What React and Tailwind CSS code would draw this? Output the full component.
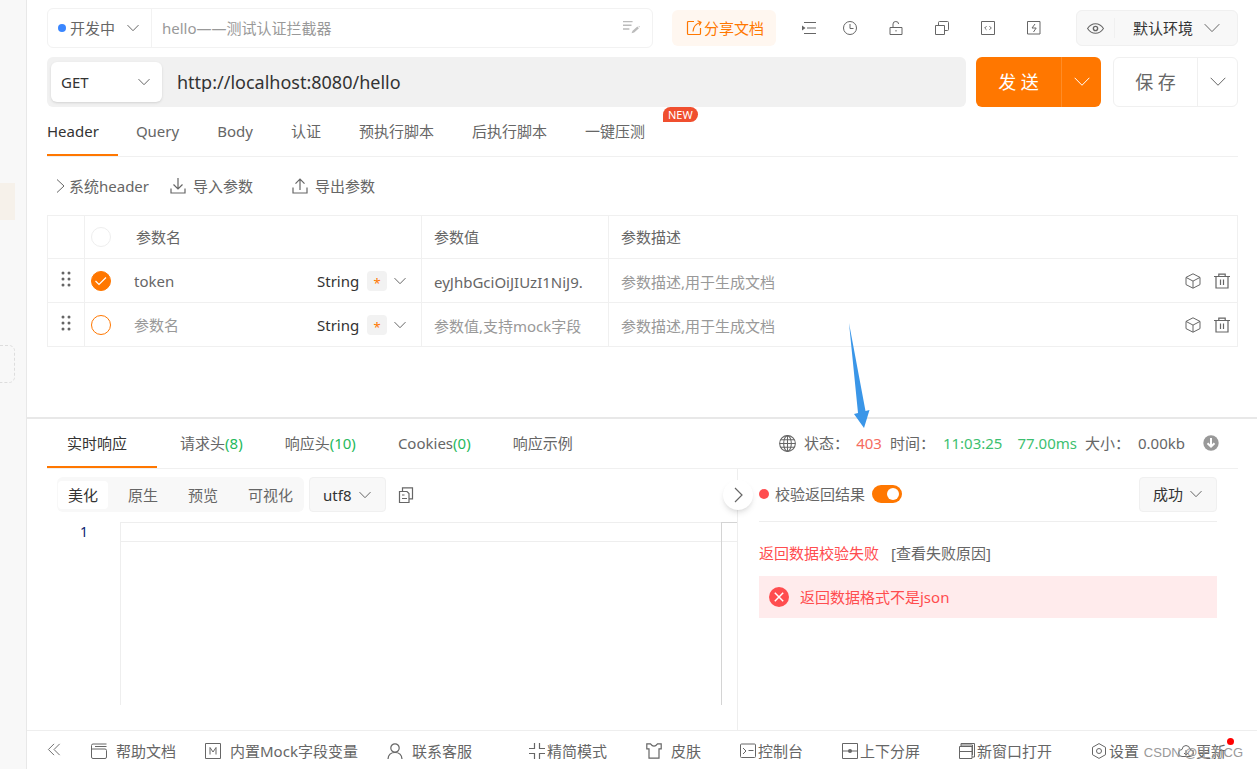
import React, { useState } from "react"

// Thin arrow used by every drop-down on the page
const Chevron = ({ className = "w-3" }) => (
  <svg viewBox="0 0 12 7" fill="none" stroke="currentColor" strokeWidth="1" className={`pointer-events-none shrink-0 ${className}`}>
    <path d="M.5.6 6 6.2 11.5.6" vectorEffect="non-scaling-stroke" />
  </svg>
)

const Icon = ({ children, className = "size-4" }) => (
  <svg viewBox="0 0 16 16" fill="none" stroke="currentColor" strokeWidth="1" className={`shrink-0 ${className}`}>
    {children}
  </svg>
)

const icons = {
  share: (
    <>
      <path d="M8 1.5H2.5q-1 0-1 1v11q0 1 1 1h11q1 0 1-1V8" strokeWidth="1.2" />
      <path d="M7 11.5C7.200 7 9 4 14.200 2.500M11.500.800l3.500 1.400-1.800 3.200" strokeWidth="1.2" />
    </>
  ),
  indent: (
    <>
      <path d="M3 2.500h12M6 8h9M3 13.500h12" strokeWidth="1.2" />
      <path d="M1 5.500v5L4.500 8z" fill="currentColor" stroke="none" />
    </>
  ),
  clock: (
    <>
      <circle cx="8" cy="8" r="6.500" />
      <path d="M8 4v4.500h3.500" />
    </>
  ),
  unlock: <path d="M2 7.500h12v7H2zM5 7.500V4q0-2.500 2.800-2.500T10.600 4M8 10v1.500" />,
  windows: (
    <>
      <path d="M1.500 5.500h9v9h-9z" />
      <path d="M4.500 5.500v-3q0-1 1-1h8q1 0 1 1v7q0 1-1 1h-3" />
    </>
  ),
  code: <path d="M1.500 1.500h13v13h-13zM6.500 6.200 4.700 8l1.800 1.800M9.500 6.200 11.300 8 9.500 9.800" />,
  bolt: <path d="M1.500 1.500h12.500v12.500H1.500zM9 4 6 8h4.200L7.500 12" />,
  eye: (
    <>
      <path d="M.5 8Q3.500 3.500 8 3.500T15.500 8Q12.500 12.500 8 12.500T.5 8z" />
      <circle cx="8" cy="8" r="2" strokeWidth="1.300" />
    </>
  ),
  edit: (
    <>
      <path d="M0 1.500h9M0 5h8M0 8.500h6" strokeWidth="1.300" />
      <path d="m8 12.500 1-2.500 4.500-3.800 1.500 1.500-4.500 4zM14.500 5.500l1.500.5-.8 1z" fill="currentColor" stroke="none" />
    </>
  ),
  download: <path d="M8 0v11M3.500 6.500 8 11l4.500-4.500M1 10.500v4.500h14v-4.500" strokeWidth="1.200" />,
  upload: <path d="M8 12V1.200M3.500 5.700 8 1.200l4.500 4.500M1 9.500v5.500h14V9.500" strokeWidth="1.200" />,
  cube: <path d="m8 .8 7 3.600v7.200l-7 3.600-7-3.600V4.400zM1 4.400l7 3.700 7-3.700M8 8.100v7" />,
  trash: <path d="M0 3.500h16M2 3.500v11.500h12V3.500M4.800 3.300V1.200h6.400v2.100M6.500 6.500v5.500M9.500 6.500v5.500" strokeWidth="1.200" />,
  globe: (
    <>
      <circle cx="8" cy="8" r="7.400" />
      <ellipse cx="8" cy="8" rx="3.600" ry="7.400" />
      <path d="M8 .6v14.800M.6 8h14.800M1.600 4.500h12.800M1.600 11.500h12.800" />
    </>
  ),
  copy: (
    <>
      <path d="M1.500 4.500h7.500l2 2v9H1.500z" strokeWidth="1.200" />
      <path d="M4.500 4.500V.800h10v11H11M4 8h2.500M4 11.500h5" strokeWidth="1.200" />
    </>
  ),
  help: <path d="M15.500 1H2Q.5 1 .5 2.500V14q0 1.500 1.500 1.500h12q1.500 0 1.500-1.500V7.500q0-1.500-1.500-1.500H.5M4 3.500h11.500" />,
  mock: <path d="M.5.500h15v15H.5zM5 11.500v-7L8 9l3-4.500v7" />,
  user: (
    <>
      <circle cx="8" cy="5" r="4.200" strokeWidth="1.200" />
      <path d="M1 16q.5-6.500 7-6.500T15 16" strokeWidth="1.200" />
    </>
  ),
  compact: <path d="M5.500 0v5.500H0M10.500 0v5.500H16M5.500 16v-5.500H0M10.500 16v-5.500H16" strokeWidth="1.200" />,
  shirt: <path d="M4.500.800H.800v5h2.200v9.400h10V5.800h2.200v-5h-3.700Q8 5.500 4.500.8z" strokeWidth="1.200" />,
  terminal: (
    <>
      <rect x=".5" y="1" width="15" height="13.500" rx="1" />
      <path d="m3 5 3 3-3 3M8.500 7.500h5" />
    </>
  ),
  split: (
    <>
      <path d="M.5.500h15v15H.5zM.5 8h15" />
      <circle cx="8" cy="8" r="2" fill="currentColor" stroke="none" />
    </>
  ),
  newWindow: <path d="M.5 3.500h12.500v12H.5zM.5 8.500H13M2 3.500V.500h13.500V14H13M2 2h11.500v10" />,
  settings: (
    <>
      <path d="m8 .600 6.500 3.700v7.400L8 15.400l-6.500-3.700V4.300z" />
      <circle cx="8" cy="8" r="2.500" />
    </>
  ),
  cloud: (
    <>
      <path d="M4 13.500Q.5 13.500.5 10T4 6.500Q4.500 2.500 8 2.500t4 4q3.500 0 3.500 3.500T12 13.500z" />
      <path d="M8 7v5M6 10l2 2 2-2" />
    </>
  ),
  collapse: <path d="m7.500 2-6 6 6 6M13.500 2l-6 6 6 6" />,
}

const toolIcons = [
  { name: "clock", label: "历史" },
  { name: "unlock", label: "锁定" },
  { name: "windows", label: "复制" },
  { name: "code", label: "代码" },
  { name: "bolt", label: "快捷" },
]

const requestTabs = ["Header", "Query", "Body", "认证", "预执行脚本", "后执行脚本", "一键压测"]

const responseTabs = [
  { text: "实时响应" },
  { text: "请求头", count: 8 },
  { text: "响应头", count: 10 },
  { text: "Cookies", count: 0 },
  { text: "响应示例" },
]

const rows = [
  { id: 1, name: "token", value: "eyJhbGciOiJIUzI1NiJ9.", checked: true },
  { id: 2, name: "", value: "", checked: false },
]

const TopBar = () => (
  <div className="flex items-center gap-[25px]">
    <div className="flex flex-1 items-center gap-[19px]">
      <div className="flex h-10 flex-1 items-center rounded-md border border-[#f2f2f2]">
        <div className="relative h-full w-[104px] border-r border-[#f2f2f2]">
          <span className="absolute left-[10px] top-[15px] size-2 rounded-full bg-[#3a86ff]" />
          <select aria-label="接口状态" className="size-full appearance-none bg-transparent pl-[22px] outline-none">
            <option>开发中</option>
          </select>
          <Chevron className="absolute right-3 top-1/2 w-3 -translate-y-1/2" />
        </div>
        <input aria-label="接口名称" placeholder="hello——测试认证拦截器" className="min-w-0 flex-1 px-[10px] outline-none placeholder:text-[#999]" />
        <Icon className="mr-3 size-[17px] text-[#bbb]">{icons.edit}</Icon>
      </div>
      <button className="flex h-9 items-center gap-[2px] rounded-md bg-[#fff7f0] pl-[14px] pr-3 text-[#ff7700]">
        <Icon>{icons.share}</Icon>
        分享文档
      </button>
    </div>
    <button aria-label="目录">
      <Icon>{icons.indent}</Icon>
    </button>
    <div className="flex gap-[30px]">
      {toolIcons.map((item) => (
        <button key={item.name} aria-label={item.label}>
          <Icon>{icons[item.name]}</Icon>
        </button>
      ))}
    </div>
    <div className="ml-[9px] flex h-9 w-[162px] items-center rounded-md border border-[#f0f0f0] bg-[#f8f8f8]">
      <button aria-label="查看环境" className="flex h-5 items-center border-r border-[#f0f0f0] px-[10px]">
        <Icon className="size-[17px]">{icons.eye}</Icon>
      </button>
      <div className="relative h-full flex-1">
        <select aria-label="环境" className="size-full appearance-none bg-transparent pl-[18px] text-[#333] outline-none">
          <option>默认环境</option>
        </select>
        <Chevron className="absolute right-[17px] top-1/2 w-4 -translate-y-1/2" />
      </div>
    </div>
  </div>
)

const UrlBar = () => (
  <div className="mt-[9px] flex h-[50px]">
    <div className="flex flex-1 items-center rounded-md bg-[#f1f1f1] px-1">
      <div className="relative h-10 w-[111px] rounded-md bg-white shadow-sm">
        <select aria-label="请求方法" className="size-full appearance-none bg-transparent pl-[10px] text-[#333] outline-none">
          <option>GET</option>
        </select>
        <Chevron className="absolute right-3 top-1/2 w-3 -translate-y-1/2" />
      </div>
      <input aria-label="请求地址" defaultValue="http://localhost:8080/hello" className="min-w-0 flex-1 bg-transparent px-[15px] text-[18px] text-[#333] outline-none" />
    </div>
    <div className="ml-[10px] flex w-[125px] rounded-md bg-[#ff7700] text-white">
      <button className="flex-1 border-r border-[#ff8c26] text-[18px]">发 送</button>
      <button aria-label="更多发送选项" className="flex w-[39px] items-center justify-center">
        <Chevron className="w-4" />
      </button>
    </div>
    <div className="ml-3 flex w-[125px] rounded-md border border-[#f0f0f0]">
      <button className="flex-1 border-r border-[#f0f0f0] text-[18px]">保 存</button>
      <button aria-label="更多保存选项" className="flex w-[39px] items-center justify-center">
        <Chevron className="w-4" />
      </button>
    </div>
  </div>
)

const ParamRow = ({ row }) => {
  const [checked, setChecked] = useState(row.checked)

  return (
    <tr className="h-11 border-b border-[#f0f0f0]">
      <td className="border-r border-[#f0f0f0]">
        <svg viewBox="0 0 10 16" fill="currentColor" className="mx-auto mb-1 w-[10px]">
          {[2, 8, 14].map((y) => (
            <g key={y}>
              <circle cx="2" cy={y} r="1.500" />
              <circle cx="8" cy={y} r="1.500" />
            </g>
          ))}
        </svg>
      </td>
      <td className="border-r border-[#f0f0f0] pl-[6px]">
        <div className="flex items-center">
          <label className="relative size-5 shrink-0">
            <input
              type="checkbox"
              aria-label="启用参数"
              checked={checked}
              onChange={() => setChecked(!checked)}
              className="block size-5 appearance-none rounded-full border border-[#ff7700] checked:bg-[#ff7700]"
            />
            {checked && (
              <svg viewBox="0 0 20 20" fill="none" stroke="white" strokeWidth="1.200" className="pointer-events-none absolute inset-0">
                <path d="m4.500 10 3.500 3.500 7-7" />
              </svg>
            )}
          </label>
          <input aria-label="参数名" defaultValue={row.name} placeholder="参数名" className="ml-[23px] w-0 min-w-0 flex-1 outline-none placeholder:text-[#999]" />
          <div className="relative mr-[15px] w-[89px]">
            <select aria-label="参数类型" className="block w-full appearance-none bg-transparent text-[#333] outline-none">
              <option>String</option>
            </select>
            <span className="pointer-events-none absolute right-[19px] top-0 size-5 rounded-sm bg-[#f2f2f2] pt-[2px] text-center text-[13px] text-[#ff7700]">*</span>
            <Chevron className="absolute right-0 top-1/2 w-3 -translate-y-1/2" />
          </div>
        </div>
      </td>
      <td className="border-r border-[#f0f0f0] px-3 pt-[3px]">
        <input aria-label="参数值" defaultValue={row.value} placeholder="参数值,支持mock字段" className="w-full outline-none placeholder:text-[#999]" />
      </td>
      <td className="pl-3 pr-[7px]">
        <div className="flex items-center gap-[13px]">
          <input aria-label="参数描述" placeholder="参数描述,用于生成文档" className="min-w-0 flex-1 pt-[3px] outline-none placeholder:text-[#999]" />
          <button aria-label="参数详情">
            <Icon>{icons.cube}</Icon>
          </button>
          <button aria-label="删除参数">
            <Icon>{icons.trash}</Icon>
          </button>
        </div>
      </td>
    </tr>
  )
}

const RequestPanel = () => (
  <section className="pb-[70px] pl-5 pr-[19px] pt-2">
    <TopBar />
    <UrlBar />

    <nav className="flex h-[50px] border-b border-[#f0f0f0]">
      {requestTabs.map((tab, i) => (
        <button
          key={tab}
          className={`relative whitespace-nowrap border-b-2 ${
            i === 0 ? "border-[#ff7700] pr-[19px] text-[#333]" : "border-transparent pl-[18px] pr-5"
          }`}
        >
          {tab}
          {tab === "一键压测" && (
            <span className="absolute left-full top-0 -ml-[2px] rounded-[8px] rounded-bl-none bg-[#f04f2f] px-[5px] text-[11px] leading-[15px] text-white">NEW</span>
          )}
        </button>
      ))}
    </nav>

    <div className="flex h-[58px] items-center pl-[9px]">
      <button className="flex items-center gap-1">
        <svg viewBox="0 0 9 16" fill="none" stroke="currentColor" className="w-[9px]">
          <path d="m1 1.500 7 6.500-7 6.500" />
        </svg>
        系统header
      </button>
      <button className="ml-[21px] flex items-center gap-[7px]">
        <Icon>{icons.download}</Icon>
        导入参数
      </button>
      <button className="ml-[39px] flex items-center gap-[7px]">
        <Icon>{icons.upload}</Icon>
        导出参数
      </button>
    </div>

    <table className="w-full table-fixed border-collapse border border-[#f0f0f0] text-left">
      <colgroup>
        <col className="w-[37px]" />
        <col className="w-[337px]" />
        <col className="w-[187px]" />
        <col />
      </colgroup>
      <thead>
        <tr className="h-[43px] border-b border-[#f0f0f0]">
          <th className="border-r border-[#f0f0f0]" />
          <th className="border-r border-[#f0f0f0] pl-[6px] font-normal">
            <div className="flex items-center">
              <input type="checkbox" aria-label="全选" className="size-5 appearance-none rounded-full border border-[#eee]" />
              <span className="ml-[25px]">参数名</span>
            </div>
          </th>
          <th className="border-r border-[#f0f0f0] px-3 font-normal">参数值</th>
          <th className="px-3 font-normal">参数描述</th>
        </tr>
      </thead>
      <tbody>
        {rows.map((row) => (
          <ParamRow key={row.id} row={row} />
        ))}
      </tbody>
    </table>
  </section>
)

const StatusLine = () => (
  <div className="ml-auto flex items-center whitespace-nowrap pb-px">
    <Icon className="size-[17px]">{icons.globe}</Icon>
    <span className="ml-2">状态：</span>
    <span className="relative ml-[7px] text-[#f56c5f]">
      403
      <svg viewBox="0 0 22 106" className="pointer-events-none absolute -left-2 bottom-6 z-10 h-[106px] w-[22px] text-[#3a96e8]">
        <path d="M1 0 17.500 88l4-1L16 105 6 91l4-1z" fill="currentColor" />
      </svg>
    </span>
    <span className="ml-2">时间：</span>
    <span className="ml-2 text-[#3dbf70]">11:03:25</span>
    <span className="ml-[15px] text-[#3dbf70]">77.00ms</span>
    <span className="ml-2">大小：</span>
    <span className="ml-2">0.00kb</span>
    <button aria-label="下载响应" className="ml-[18px] mr-[19px]">
      <svg viewBox="0 0 16 16" className="size-4 text-[#999]">
        <circle cx="8" cy="8" r="7.700" fill="currentColor" />
        <path d="M8 3v8.500M4.500 8.200 8 11.700l3.500-3.500" fill="none" stroke="white" strokeWidth="2" />
      </svg>
    </button>
  </div>
)

const BodyView = () => (
  <div className="relative flex min-w-0 flex-1 flex-col border-r border-[#eee]">
    <div className="flex h-[53px] items-center pb-[2px] pl-[10px]">
      <div className="flex h-[35px] items-center gap-[10px] rounded-md bg-[#f8f8f8] px-px">
        {["美化", "原生", "预览", "可视化"].map((mode, i) => (
          <button key={mode} className={`h-7 rounded-sm px-[10px] ${i === 0 ? "bg-white text-[#333]" : ""}`}>
            {mode}
          </button>
        ))}
      </div>
      <div className="relative ml-[5px] h-[35px] w-[77px] rounded-sm border border-[#f0f0f0] bg-[#f8f8f8]">
        <select aria-label="编码" className="size-full appearance-none bg-transparent pl-[13px] text-[#333] outline-none">
          <option>utf8</option>
        </select>
        <Chevron className="absolute right-[14px] top-1/2 w-3 -translate-y-1/2" />
      </div>
      <button aria-label="复制响应" className="ml-3">
        <Icon>{icons.copy}</Icon>
      </button>
    </div>
    <div className="mb-[25px] flex flex-1 leading-5">
      <div className="w-[73px] pr-8 text-right text-[14px] text-[#0b216f]">1</div>
      <div className="flex flex-1 border-l border-[#eee]">
        <div className="flex-1">
          <div className="h-5 border-y border-[#eee]" />
        </div>
        <div className="w-4 border-l border-t border-[#d4d4d4]">
          <div className="h-[19px] border-b border-[#eee]" />
        </div>
      </div>
    </div>
    <button
      aria-label="收起校验"
      className="absolute -right-4 top-[11px] z-10 flex size-[30px] items-center justify-center rounded-full bg-white shadow-md"
    >
      <svg viewBox="0 0 9 16" fill="none" stroke="currentColor" strokeWidth="1.200" className="w-[9px]">
        <path d="m1 1 7 7-7 7" />
      </svg>
    </button>
  </div>
)

const CheckResult = () => {
  const [enabled, setEnabled] = useState(true)

  return (
    <div className="w-[500px] px-[21px]">
      <div className="flex h-[53px] items-center border-b border-[#eee] pb-[2px]">
        <span className="size-[10px] rounded-full bg-[#ff4d4f]" />
        <label htmlFor="check-result" className="ml-[6px]">
          校验返回结果
        </label>
        <div className="relative ml-[7px] h-[18px] w-[30px]">
          <input
            id="check-result"
            type="checkbox"
            role="switch"
            checked={enabled}
            onChange={() => setEnabled(!enabled)}
            className="block h-full w-full appearance-none rounded-full bg-[#ccc] checked:bg-[#ff7700]"
          />
          <span className={`pointer-events-none absolute top-[3px] size-3 rounded-full bg-white ${enabled ? "right-[3px]" : "left-[3px]"}`} />
        </div>
        <div className="relative ml-auto h-[35px] w-[78px] rounded-sm border border-[#f0f0f0] bg-[#f8f8f8]">
          <select aria-label="校验示例" className="size-full appearance-none bg-transparent pl-[13px] text-[#333] outline-none">
            <option>成功</option>
          </select>
          <Chevron className="absolute right-[14px] top-1/2 w-3 -translate-y-1/2" />
        </div>
      </div>
      <div className="flex h-[54px] items-center pt-2">
        <span className="text-[#ff4d4f]">返回数据校验失败</span>
        <button className="ml-3">[查看失败原因]</button>
      </div>
      <div className="flex h-[42px] items-center bg-[#ffebec] pl-[10px] text-[#ff4d4f]">
        <svg viewBox="0 0 20 20" className="size-5">
          <circle cx="10" cy="10" r="10" fill="currentColor" />
          <path d="m5.800 5.800 8.400 8.400m0-8.400-8.400 8.400" stroke="white" strokeWidth="1.500" />
        </svg>
        <span className="ml-[11px]">返回数据格式不是json</span>
      </div>
    </div>
  )
}

const ResponsePanel = () => (
  <section className="flex flex-1 flex-col border-t-2 border-[#e8e8e8] pl-5 pr-[19px]">
    <div className="flex h-[50px] border-b border-[#f0f0f0]">
      {responseTabs.map((tab, i) => (
        <button
          key={tab.text}
          className={`whitespace-nowrap border-b-2 ${
            i === 0 ? "mr-[2px] border-[#ff7700] pl-5 pr-[30px] text-[#333]" : "border-transparent px-[21px]"
          }`}
        >
          {tab.text}
          {tab.count !== undefined && <span className="text-[#1fb95d]">({tab.count})</span>}
        </button>
      ))}
      <StatusLine />
    </div>
    <div className="flex flex-1">
      <BodyView />
      <CheckResult />
    </div>
  </section>
)

const FooterItem = ({ icon, text, tight }) => (
  <button className={`relative flex items-center whitespace-nowrap ${tight ? "gap-[2px]" : "gap-[9px]"}`}>
    <Icon>{icons[icon]}</Icon>
    {text}
    {icon === "cloud" && <span className="absolute -right-2 -top-[3px] size-[7px] rounded-full bg-[#ff0000]" />}
  </button>
)

const Footer = () => (
  <footer className="relative flex h-[39px] items-center border-t border-[#eee] pl-5 pr-[31px] pt-[2px]">
    <div className="flex items-center gap-[29px]">
      <button aria-label="收起侧栏">
        <Icon className="mb-1 size-[15px]">{icons.collapse}</Icon>
      </button>
      <FooterItem icon="help" text="帮助文档" />
      <FooterItem icon="mock" text="内置Mock字段变量" />
      <FooterItem icon="user" text="联系客服" />
    </div>
    <div className="ml-auto flex items-center gap-[39px]">
      <FooterItem icon="compact" text="精简模式" tight />
      <FooterItem icon="shirt" text="皮肤" />
      <FooterItem icon="terminal" text="控制台" tight />
      <FooterItem icon="split" text="上下分屏" tight />
      <FooterItem icon="newWindow" text="新窗口打开" tight />
      <FooterItem icon="settings" text="设置" tight />
      <FooterItem icon="cloud" text="更新" tight />
    </div>
    <span className="pointer-events-none absolute bottom-[6px] right-[14px] font-['Liberation_Sans','Noto_Sans_CJK_SC',sans-serif] text-[13px] leading-5 text-[#999]">
      CSDN @王为CG
    </span>
  </footer>
)

const App = () => {
  return (
    <div className="flex min-h-screen bg-white font-['Noto_Sans','Noto_Sans_CJK_SC',sans-serif] text-[15px] leading-5 text-[#666]">
      <aside className="w-[27px] shrink-0 border-r border-[#e8e8e8] bg-[#f8f8f8] pt-[183px]">
        <div className="h-[37px] w-[15px] bg-[#f6f1ea]" />
        <div className="mt-[125px] h-[38px] w-[15px] rounded-r-md border border-l-0 border-dashed border-[#ddd]" />
      </aside>
      <main className="flex min-w-0 flex-1 flex-col">
        <RequestPanel />
        <ResponsePanel />
        <Footer />
      </main>
    </div>
  )
}

export default App
